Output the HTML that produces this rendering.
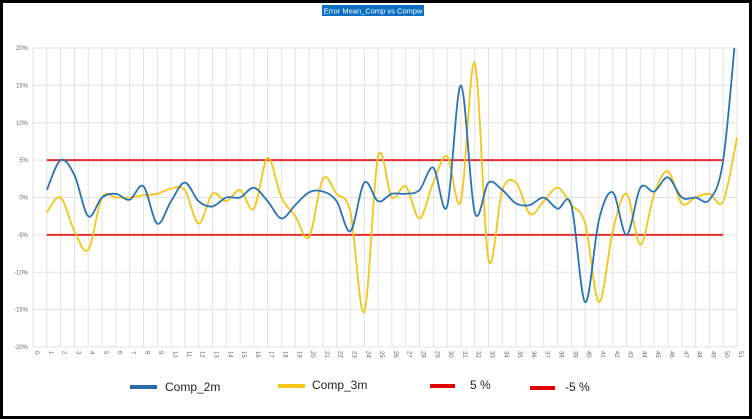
<!DOCTYPE html>
<html><head><meta charset="utf-8"><style>
html,body{margin:0;padding:0;background:#fff;}
body{width:752px;height:419px;overflow:hidden;position:relative;font-family:"Liberation Sans",sans-serif;}
#frame{position:absolute;left:0;top:0;width:746px;height:413px;border:3px solid #000;}
</style></head><body>
<div id="frame"></div>
<svg id="s" width="752" height="419" style="position:absolute;left:0;top:0" xmlns="http://www.w3.org/2000/svg"></svg>
<script>
var s=document.getElementById('s');
var X0=33,DX=(737-33)/51,Y0=197.5,PY=(347-48)/40;
function X(i){return X0+i*DX}
function Y(v){return Y0-v*PY}
var h='';
h+='<rect x="322" y="5" width="102" height="11" fill="#0a6fc2"/><text x="373" y="13.5" font-size="7.5" fill="#fff" text-anchor="middle">Error Mean_Comp vs  Compw</text>';
for(var v=-20;v<=20;v+=5){var y=Y(v);h+='<line x1="33" x2="737" y1="'+y+'" y2="'+y+'" stroke="#e2e2e2" stroke-width="1"/>';
h+='<text x="28" y="'+(y+2)+'" font-size="6" fill="#666" text-anchor="end">'+v+'%</text>';}
for(var i=0;i<=51;i++){var x=X(i);h+='<line x1="'+x+'" x2="'+x+'" y1="48" y2="347" stroke="#e2e2e2" stroke-width="1"/>';
h+='<text transform="translate('+(x+2)+',351) rotate(90)" font-size="6" fill="#666">'+i+'</text>';}
var b=[1,5,3,-2.5,0,0.5,-0.3,1.5,-3.5,-0.5,2,-0.5,-1.2,0,0,1.3,-0.5,-2.8,-1,0.7,0.8,-0.5,-4.5,2,-0.5,0.5,0.5,1,4,-1.2,15,-2,2,1,-0.8,-1,0,-1.5,-1,-14,-3,0.7,-5,1.3,0.8,2.7,0,0,-0.3,5,24];
var yv=[-2,0,-4.5,-7,0,0,0,0.3,0.5,1.2,1,-3.5,0.5,-0.5,1,-1.5,5.3,0,-2.5,-5.3,2.5,0.5,-2,-15.3,5.5,0,1.5,-2.8,2,5.5,-0.5,18,-8.3,1,2,-2.2,-0.5,1.3,-1,-3.5,-14,-4.5,0.5,-6.3,0.5,3.5,-0.8,0,0.5,-0.5,8];
function path(a){var p=a.map(function(v,k){return [X(k+1),Y(v)]});var d='M'+p[0][0]+','+p[0][1];
for(var k=0;k<p.length-1;k++){var p0=p[k-1]||p[k],p1=p[k],p2=p[k+1],p3=p[k+2]||p2;
d+=' C'+(p1[0]+(p2[0]-p0[0])/6)+','+(p1[1]+(p2[1]-p0[1])/6)+' '+(p2[0]-(p3[0]-p1[0])/6)+','+(p2[1]-(p3[1]-p1[1])/6)+' '+p2[0]+','+p2[1];}return d;}
h+='<clipPath id="c"><rect x="33" y="48" width="710" height="300"/></clipPath>';
h+='<line x1="'+X(1)+'" x2="'+X(50)+'" y1="'+Y(5)+'" y2="'+Y(5)+'" stroke="#e03030" stroke-width="2"/>';
h+='<line x1="'+X(1)+'" x2="'+X(50)+'" y1="'+Y(-5)+'" y2="'+Y(-5)+'" stroke="#e03030" stroke-width="2"/>';
h+='<g clip-path="url(#c)"><path d="'+path(yv)+'" fill="none" stroke="#f5c518" stroke-width="1.8"/>';
h+='<path d="'+path(b)+'" fill="none" stroke="#2a73b5" stroke-width="1.8"/></g>';
h+='<rect x="130" y="385" width="27" height="4" fill="#2a6aa8"/><text x="165" y="391" font-size="12" fill="#222">Comp_2m</text>';
h+='<rect x="278" y="384" width="27" height="4" fill="#f5c518"/><text x="312" y="389" font-size="12" fill="#222">Comp_3m</text>';
h+='<rect x="430" y="384" width="25" height="4" fill="#e00000"/><text x="470" y="389" font-size="12" fill="#222">5 %</text>';
h+='<rect x="530" y="386" width="25" height="4" fill="#e00000"/><text x="565" y="391" font-size="12" fill="#222">-5 %</text>';
s.innerHTML=h;
</script>
</body></html>
